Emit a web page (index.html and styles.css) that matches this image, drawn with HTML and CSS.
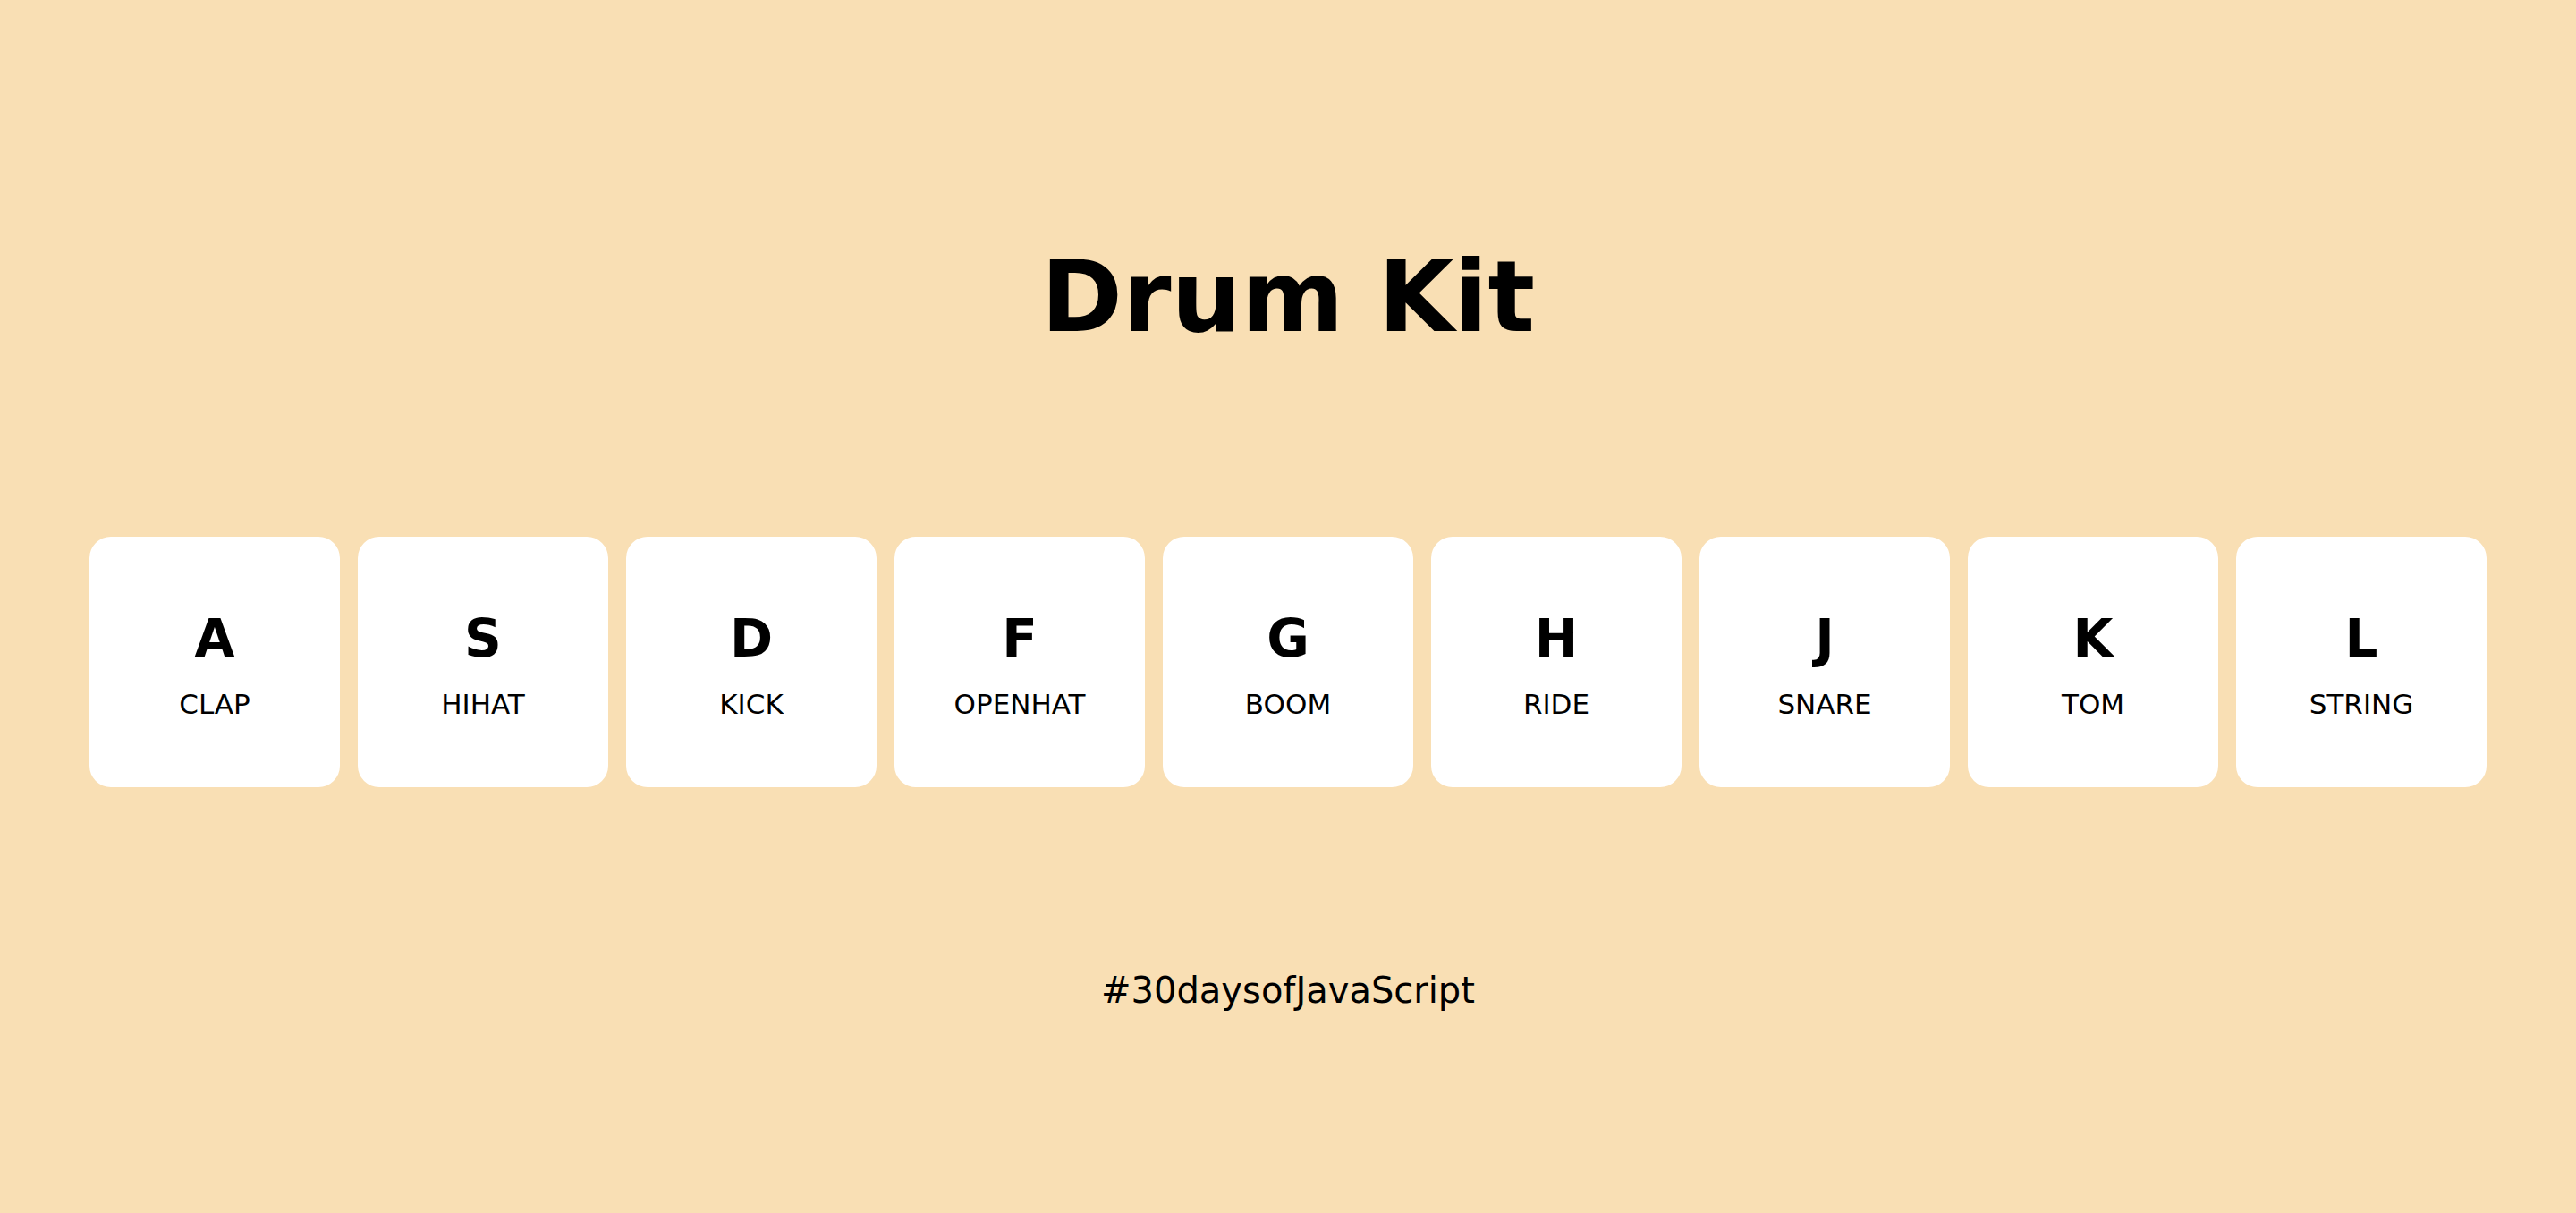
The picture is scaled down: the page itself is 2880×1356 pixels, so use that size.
FILE: index.html
```html
<!DOCTYPE html>
<html lang="en">
<head>
<meta charset="utf-8">
<title>Drum Kit</title>
<link rel="stylesheet" href="styles.css">
</head>
<body>
<main class="page">
  <h1 class="title">Drum Kit</h1>
  <div class="keys">
    <div class="key"><kbd class="key-letter">A</kbd><span class="key-sound">CLAP</span></div>
    <div class="key"><kbd class="key-letter">S</kbd><span class="key-sound">HIHAT</span></div>
    <div class="key"><kbd class="key-letter">D</kbd><span class="key-sound">KICK</span></div>
    <div class="key"><kbd class="key-letter">F</kbd><span class="key-sound">OPENHAT</span></div>
    <div class="key"><kbd class="key-letter">G</kbd><span class="key-sound">BOOM</span></div>
    <div class="key"><kbd class="key-letter">H</kbd><span class="key-sound">RIDE</span></div>
    <div class="key"><kbd class="key-letter">J</kbd><span class="key-sound">SNARE</span></div>
    <div class="key"><kbd class="key-letter">K</kbd><span class="key-sound">TOM</span></div>
    <div class="key"><kbd class="key-letter">L</kbd><span class="key-sound">STRING</span></div>
  </div>
  <p class="footer">#30daysofJavaScript</p>
</main>
</body>
</html>
```
FILE: styles.css
```css
html, body {
  margin: 0;
  padding: 0;
}
body {
  background: #f9dfb4;
  color: #000;
  font-family: "DejaVu Sans", "Noto Sans", sans-serif;
  min-height: 100vh;
}
.page {
  display: flex;
  flex-direction: column;
  align-items: center;
  padding-top: 273px;
}
.title {
  margin: 0;
  font-size: 110px;
  line-height: 118px;
  font-weight: 700;
}
.keys {
  margin-top: 209px;
  display: flex;
  gap: 20px;
}
.key {
  box-sizing: border-box;
  width: 280px;
  height: 280px;
  padding-top: 6px;
  background: #fff;
  border-radius: 24px;
  display: flex;
  flex-direction: column;
  align-items: center;
  justify-content: center;
  gap: 27px;
}
.key-letter {
  font-family: inherit;
  font-size: 58px;
  line-height: 60px;
  font-weight: 700;
}
.key-sound {
  font-size: 31px;
  line-height: 32px;
  font-weight: 400;
}
.footer {
  margin: 203px 0 0;
  font-size: 40px;
  line-height: 48px;
  font-weight: 500;
}
```
